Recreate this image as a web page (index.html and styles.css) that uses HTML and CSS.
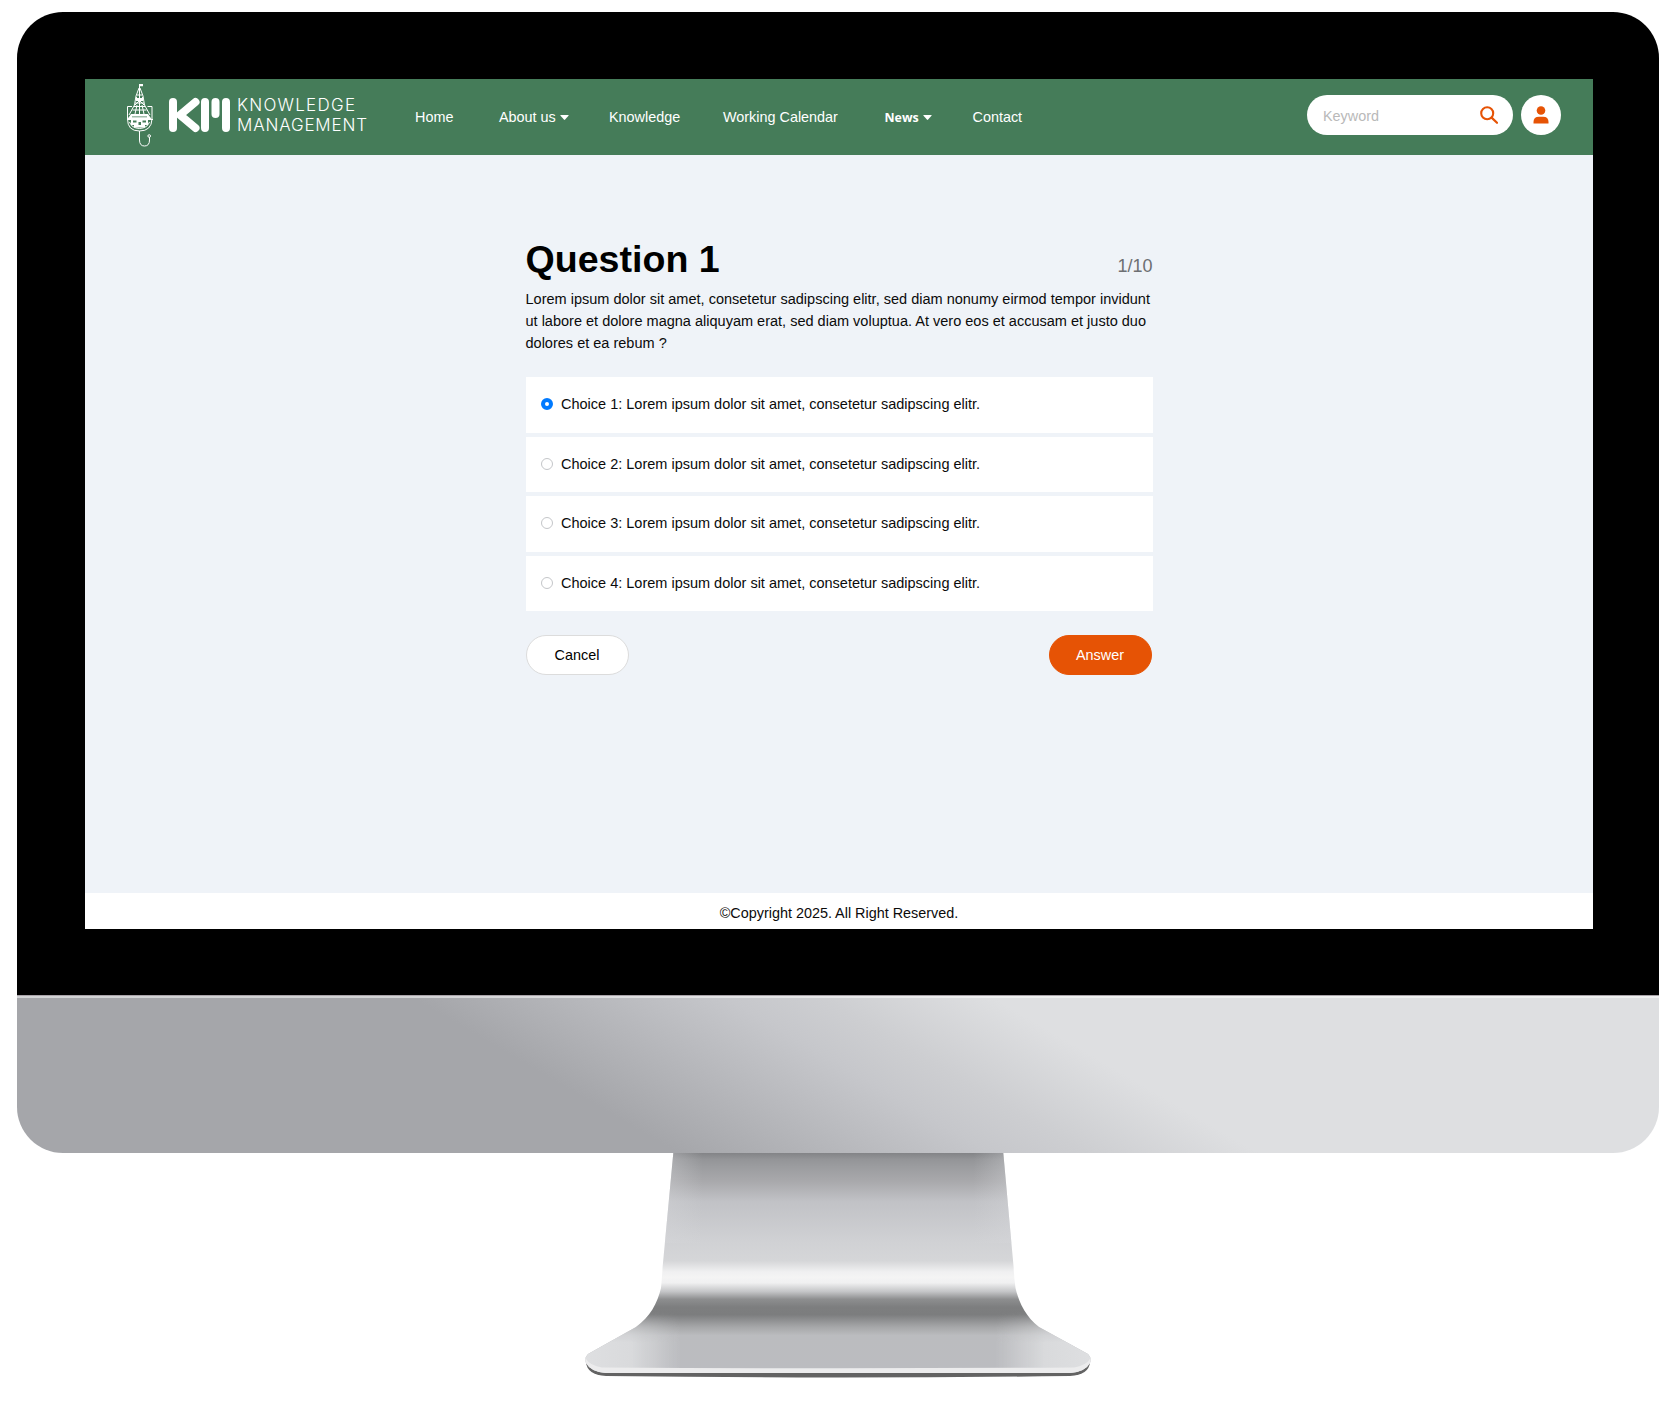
FILE: index.html
```html
<!DOCTYPE html>
<html lang="en">
<head>
<meta charset="utf-8">
<title>Knowledge Management - Question 1</title>
<link rel="stylesheet" href="styles.css">
</head>
<body>
<div class="computer">
  <div class="bezel">
    <div class="screen">
      <header class="topbar">
        <svg class="logo" width="246" height="68" viewBox="124 82 246 68" role="img" aria-label="KM Knowledge Management">
          <g fill="none" stroke="#fff" stroke-width="1">
            <path d="M139.500 94V85M139 88l-3 8-1.500 9-5.500 10M140 88l3 8 1.500 9 5.500 10M137 95h5M136 99h7M135 103h9M134 106.500h11M132.500 110h14M136 97l8 8M143 97l-8 8M137 105l-2 9M142 105l2 9M139.500 94v20"/>
            <path d="M132 106.500H127.500V119q0 12 12 12t12.500-12V106.500H147.500"/>
            <path d="M127 119.500h4M148 119.500h5M129.500 122q2 6 10 6.500 8-.5 10-6.500"/>
            <path d="M139.500 131v9q0 6 5 6t5-6v-3"/>
            <circle cx="149.200" cy="136" r="1.300"/>
          </g>
          <path d="M139 84h4v2.200h-4zM136 98h7v3h-7z" fill="#fff"/>
          <path d="M131 114h17l3.500 5h-24z" fill="#fff"/>
          <path d="M131 119h17v6h-3v2.500h-11V125h-3z" fill="#fff"/>
          <path d="M133 120.500h3.500v2H133zM142.500 120.500h3.500v2h-3.500zM138.500 122h2.500v3h-2.500zM132 116.500h15v.8h-15z" fill="#457c59"/>
          <g stroke="#fff" stroke-width="8" stroke-linecap="round" fill="none">
            <path d="M173 102v26"/>
            <path d="M195.500 102L180 115l15.500 13" stroke-linejoin="round"/>
            <path d="M205 102v26M226 102v26"/>
            <path d="M215.500 102v12"/>
          </g>
          <text class="logo-text" x="237" y="111" textLength="118">KNOWLEDGE</text>
          <text class="logo-text" x="237" y="131" textLength="130">MANAGEMENT</text>
        </svg>
        <nav class="nav">
          <a>Home</a>
          <a>About us<svg class="caret" width="9" height="5" viewBox="0 0 9 5"><path d="M.8 0h7.400q.8 0 .3.700L5.100 4.600q-.6.600-1.200 0L.5.700Q0 0 .8 0z"/></svg></a>
          <a>Knowledge</a>
          <a>Working Calendar</a>
          <a class="active">News<svg class="caret" width="9" height="5" viewBox="0 0 9 5"><path d="M.8 0h7.400q.8 0 .3.700L5.100 4.600q-.6.600-1.200 0L.5.700Q0 0 .8 0z"/></svg></a>
          <a>Contact</a>
        </nav>
        <div class="search">
          <span>Keyword</span>
          <svg width="18" height="18" viewBox="0 0 18 18" fill="none" stroke="#e65305"><circle cx="7.200" cy="7.200" r="6" stroke-width="2.100"/><path d="M11.600 11.600l5.400 5.200" stroke-width="2.200" stroke-linecap="round"/></svg>
        </div>
        <div class="user">
          <svg width="16" height="18" viewBox="0 0 16 18" fill="#e65305"><circle cx="8" cy="4.500" r="4.300"/><path d="M.5 17.500v-1.500Q.5 10.800 6 10.800h4q5.500 0 5.500 5.200v1.500z"/></svg>
        </div>
      </header>
      <main class="main">
        <section class="quiz">
          <div class="heading"><h1>Question 1</h1><span>1/10</span></div>
          <p>Lorem ipsum dolor sit amet, consetetur sadipscing elitr, sed diam nonumy eirmod tempor invidunt ut labore et dolore magna aliquyam erat, sed diam voluptua. At vero eos et accusam et justo duo dolores et ea rebum ?</p>
          <div class="choices">
            <label class="choice"><i class="radio checked"></i>Choice 1: Lorem ipsum dolor sit amet, consetetur sadipscing elitr.</label>
            <label class="choice"><i class="radio"></i>Choice 2: Lorem ipsum dolor sit amet, consetetur sadipscing elitr.</label>
            <label class="choice"><i class="radio"></i>Choice 3: Lorem ipsum dolor sit amet, consetetur sadipscing elitr.</label>
            <label class="choice"><i class="radio"></i>Choice 4: Lorem ipsum dolor sit amet, consetetur sadipscing elitr.</label>
          </div>
          <div class="actions"><button class="btn">Cancel</button><button class="btn primary">Answer</button></div>
        </section>
      </main>
      <footer class="footer">©Copyright 2025. All Right Reserved.</footer>
    </div>
  </div>
  <div class="chin"></div>
  <svg class="stand" width="520" height="230" viewBox="578 1153 520 230">
    <defs>
      <linearGradient id="metal" gradientUnits="userSpaceOnUse" x1="0" y1="1153" x2="0" y2="1373">
        <stop offset="0" stop-color="#838487"/>
        <stop offset=".03" stop-color="#949598"/>
        <stop offset=".065" stop-color="#9c9da0"/>
        <stop offset=".13" stop-color="#a9a9ac"/>
        <stop offset=".22" stop-color="#c1c2c6"/>
        <stop offset=".4" stop-color="#d0d1d4"/>
        <stop offset=".49" stop-color="#d5d6d8"/>
        <stop offset=".54" stop-color="#f0f0f1"/>
        <stop offset=".565" stop-color="#f4f4f4"/>
        <stop offset=".59" stop-color="#f0f0f1"/>
        <stop offset=".63" stop-color="#c4c5c7"/>
        <stop offset=".665" stop-color="#8d8e8f"/>
        <stop offset=".7" stop-color="#7d7e7f"/>
        <stop offset=".735" stop-color="#7c7d7e"/>
        <stop offset=".79" stop-color="#a5a6a8"/>
        <stop offset=".83" stop-color="#bbbcbf"/>
        <stop offset="1" stop-color="#bbbcc0"/>
      </linearGradient>
      <linearGradient id="sides" x1="0" x2="1" y1="0" y2="0">
        <stop offset="0" stop-color="#dedfe1"/>
        <stop offset=".09" stop-color="#d9dadc"/>
        <stop offset=".19" stop-color="#d9dadc" stop-opacity="0"/>
        <stop offset=".81" stop-color="#d9dadc" stop-opacity="0"/>
        <stop offset=".91" stop-color="#d9dadc"/>
        <stop offset="1" stop-color="#dedfe1"/>
      </linearGradient>
      <linearGradient id="fade" x1="0" x2="0" y1="0" y2="1">
        <stop offset="0" stop-color="#000"/>
        <stop offset=".5" stop-color="#fff"/>
      </linearGradient>
      <linearGradient id="neck" x1="0" x2="1" y1="0" y2="0">
        <stop offset="0" stop-color="#d5d6d9" stop-opacity=".45"/>
        <stop offset=".12" stop-color="#d5d6d9" stop-opacity="0"/>
        <stop offset=".88" stop-color="#d5d6d9" stop-opacity="0"/>
        <stop offset="1" stop-color="#d5d6d9" stop-opacity=".45"/>
      </linearGradient>
      <mask id="lower"><rect x="578" y="1312" width="520" height="62" fill="url(#fade)"/></mask>
      <clipPath id="shape"><path d="M673.300 1153H1003.300L1013.600 1267Q1014 1278 1015.500 1288C1019 1303 1026 1317 1039 1327L1088 1354Q1092 1358 1090 1363Q1085 1372 1070 1373H606Q591 1372 586 1363Q584 1358 588 1354L636 1327C650 1317 657.500 1303 661 1288Q662 1278 662.600 1267z"/></clipPath>
      <filter id="soft"><feGaussianBlur stdDeviation=".6"/></filter>
    </defs>
    <path d="M586 1362Q587 1375 606 1376Q838 1379 1070 1376Q1089 1375 1090 1362z" fill="#636363" filter="url(#soft)"/>
    <g clip-path="url(#shape)">
      <path d="M578 1153h520v221H578z" fill="url(#metal)"/>
      <path d="M660 1153h356v90H660z" fill="url(#neck)"/>
      <path d="M585 1312h506v62H585z" fill="url(#sides)" mask="url(#lower)"/>
      <path d="M583 1354Q588 1366 602 1367.500Q838 1369 1074 1367.500Q1088 1366 1093 1354V1376H583z" fill="#ececed"/>
    </g>
  </svg>
</div>
</body>
</html>
```
FILE: styles.css
```css
* { box-sizing: border-box; }
body {
  margin: 0;
  background: #fff;
  font-family: "Liberation Sans", Arial, sans-serif;
  font-size: 14.4px;
  color: #0b0b0b;
}
.computer {
  height: 1402px;
  padding: 12px 11px 0 16.500px;
  display: flex;
  flex-direction: column;
  overflow: hidden;
}
.bezel {
  height: 983px;
  padding: 67px 66px 66px 68.500px;
  background: #000;
  border-radius: 46px 46px 0 0;
}
.screen {
  height: 850px;
  background: #eff3f8;
  display: flex;
  flex-direction: column;
}
.topbar {
  height: 76px;
  padding: 0 32px 0 39px;
  background: #457c59;
  display: flex;
  align-items: flex-start;
}
.logo { margin-top: 3px; flex: none; }
.logo-text { font: 300 17px Inter, sans-serif; fill: #fff; }
.nav {
  width: 809px;
  padding: 30px 0 0 45px;
  display: grid;
  grid-template-columns: 84px 110px 114px 161.500px 88px auto;
  color: #fff;
  line-height: 17px;
  white-space: nowrap;
  flex: none;
}
.nav .active { font-family: "Open Sans", sans-serif; font-weight: 700; font-size: 12.400px; }
.caret { margin-left: 4px; vertical-align: 2px; fill: #fff; }
.search {
  width: 206px;
  height: 40px;
  margin: 16px 8px 0 auto;
  padding: 0 15px 0 16px;
  display: flex;
  align-items: center;
  justify-content: space-between;
  flex: none;
  background: #fff;
  border-radius: 20px;
  color: #b9b9b9;
}
.search span { padding-top: 2px; }
.user {
  width: 40px;
  height: 40px;
  margin-top: 16px;
  flex: none;
  display: grid;
  place-items: center;
  background: #fff;
  border-radius: 50%;
}
.main { flex: 1; display: flex; justify-content: center; }
.quiz { width: 627px; padding-top: 82px; }
.heading { height: 51px; display: flex; justify-content: space-between; align-items: baseline; }
h1 { margin: 0; font-size: 37.600px; line-height: 44px; color: #000; }
.heading span { font-size: 18px; color: #6d6f72; }
.quiz p { margin: 0 -4px 0 0; font-size: 14.520px; line-height: 22.200px; }
.choices { margin-top: 22.400px; display: grid; gap: 4px; grid-template-rows: 56px 55px 56px 55px; }
.choice { background: #fff; padding: 0 15.500px 2px; display: flex; align-items: center; font-size: 14.500px; }
.radio { width: 12px; height: 12px; margin-right: 8px; border: 1px solid #c4c6c9; border-radius: 50%; }
.radio.checked { border: 4px solid #007aff; background: #fff; }
.actions { margin-top: 24px; display: flex; justify-content: space-between; }
.btn {
  width: 103px;
  height: 40px;
  border: 1px solid #dcdcdc;
  border-radius: 20px;
  background: #fff;
  font: inherit;
  color: #000;
}
.btn.primary { margin-right: 1px; background: #e65305; border-color: #e65305; color: #fff; }
.footer { height: 36px; background: #fff; display: grid; place-items: center; padding-top: 4px; }
.chin {
  height: 158px;
  flex: none;
  border-top: 1px solid #a8a2a8;
  border-radius: 0 0 46px 46px;
  background: linear-gradient(#ffffff80, #ffffff80) top / 100% 2px no-repeat, linear-gradient(30.300deg, #a5a6aa 34.600%, #c6c7cb 51%, #cdced1 56%, #dedfe1 65%);
}
.stand { margin-left: 561.500px; display: block; flex: none; }
```
